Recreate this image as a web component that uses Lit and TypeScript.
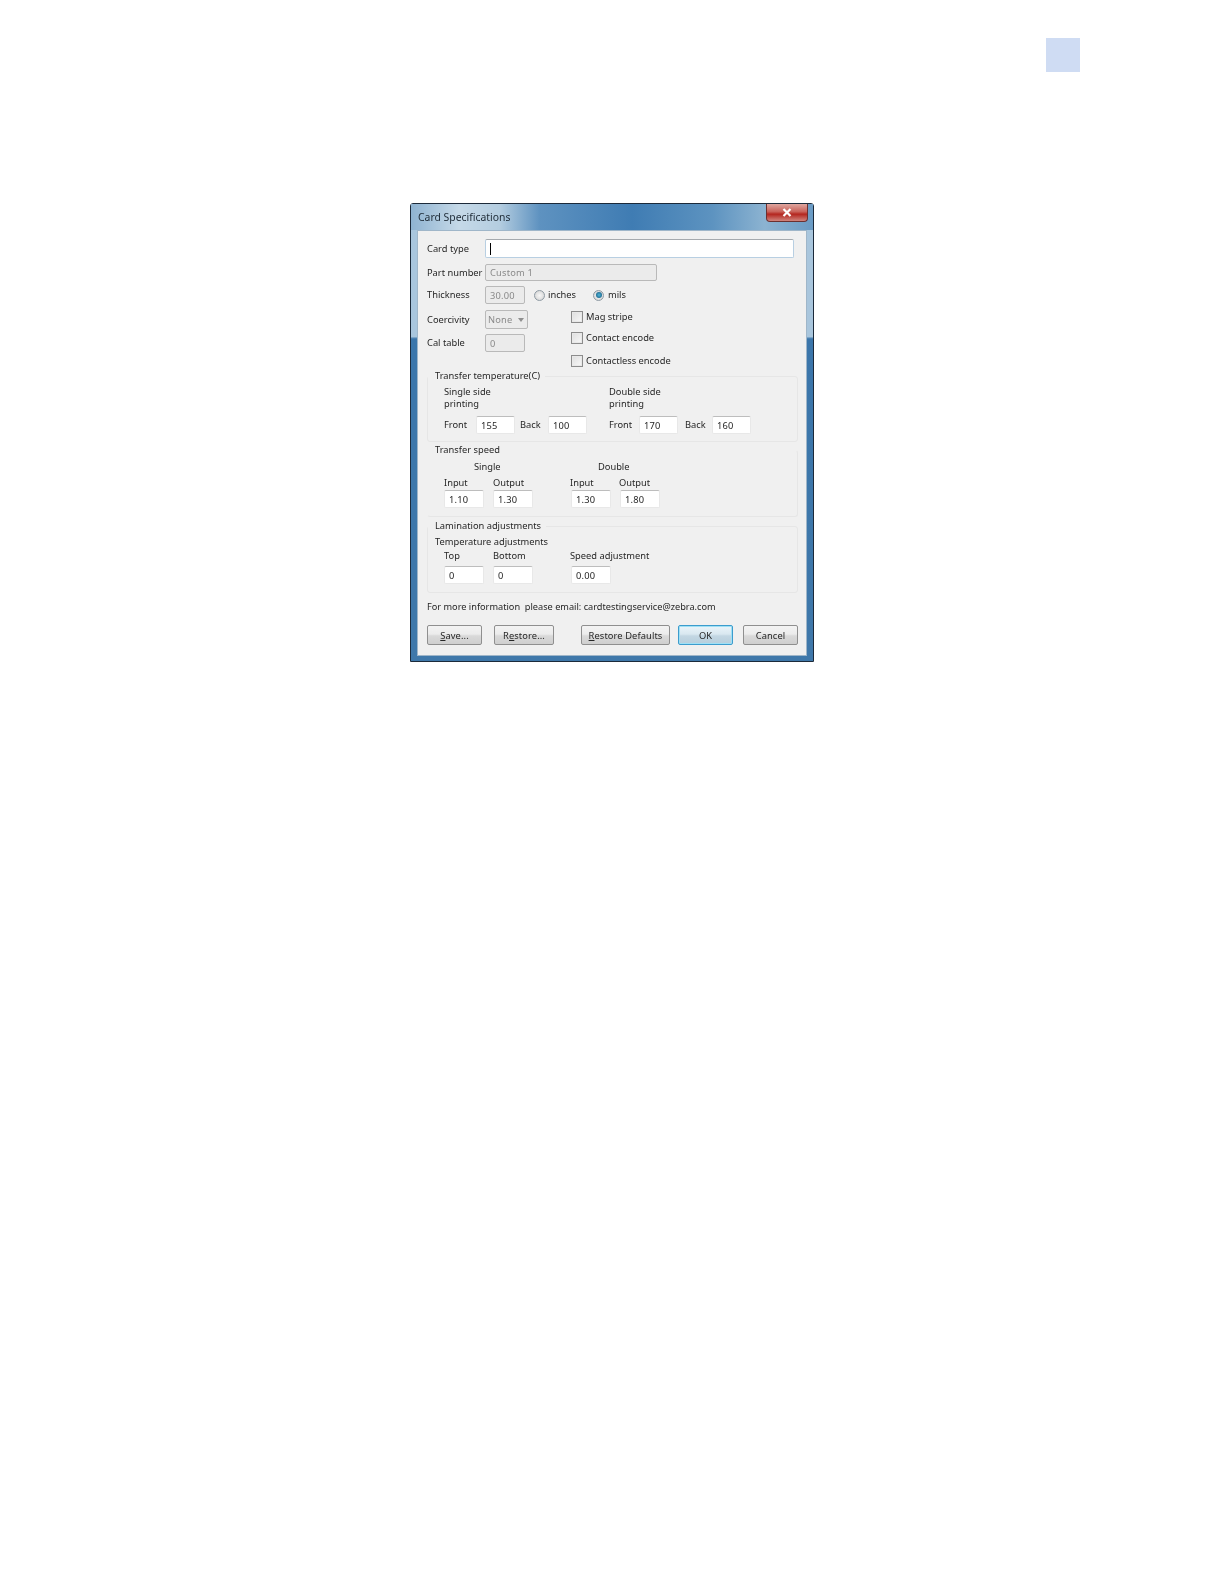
import { LitElement, html, css } from "lit";
import { customElement } from "lit/decorators.js";

@customElement("app-root")
export class AppRoot extends LitElement {
  static styles = css`
    :host { display: block; width: 1224px; height: 1584px; background: #fff; font-family: "Noto Sans", "Open Sans", sans-serif; font-size: 9.3px; color: #262626; overflow: hidden; }
    .top { display: flex; justify-content: flex-end; padding: 38px 144px 0 0; }
    .tab { width: 34px; height: 34px; background: #cfdcf3; }
    .window { margin: 131px 0 0 410px; width: 404px; height: 459px; box-sizing: border-box; border: 1px solid #1c2a3a; border-radius: 3px 3px 0 0; display: flex; flex-direction: column; filter: blur(.3px);
      background: linear-gradient(#a9c6dd 0, #a9c6dd 29%, #3b76ab 29.5%, #3f78aa 100%); }
    .title { height: 26px; flex: none; display: flex; justify-content: space-between; align-items: flex-start; padding-left: 7px; font-size: 10.4px; color: #1d2a36; line-height: 26px;
      background: linear-gradient(90deg, #8fb3d1 0, #c5d9e8 12%, #b4cde0 22%, #5e92c0 32%, #3f7cb3 55%, #5d93c0 75%, #8cb3d1 88%, #6a9bc5 100%); }
    .close { width: 42px; height: 18px; margin-right: 5px; border: 1px solid #6c3030; border-top: 0; border-radius: 0 0 4px 4px; box-sizing: border-box; background: linear-gradient(#dfa7a0, #c9625a 45%, #b4261f 60%, #d0857e); display: flex; align-items: center; justify-content: center; }
    .client { flex: 1; margin: 0 6px 5px; background: #f0f0f0; border: 1px solid #9fb6c9; box-sizing: border-box; padding: 0 8px 0 9px; display: flex; flex-direction: column; }
    .row { display: flex; align-items: center; }
    .lbl { white-space: nowrap; line-height: 14px; }
    .lbl2 { white-space: nowrap; line-height: 12px; }
    .info { font-size: 9.2px; }
    .field { box-sizing: border-box; height: 18px; background: #fff; border: 1px solid #e8e8e8; border-top-color: #bdbdbd; border-radius: 2px; padding-left: 4px; display: flex; align-items: center; font-size: 9.3px; letter-spacing: .2px; flex: none; width: 40px; }
    .dis { background: #ebebeb; border-color: #b9b9b9; color: #8a8a8a; }
    .cardtype { width: 309px; height: 19px; border-color: #b8cfe2; border-top-color: #a5a9ad; }
    .caret { width: 1px; height: 12px; background: #000; }
    .part { width: 172px; height: 17px; }
    .name { width: 58px; flex: none; }
    .sel { width: 43px; height: 19px; justify-content: space-between; padding: 0 3px 0 2px; }
    .arrow { width: 0; height: 0; border: 3.5px solid transparent; border-top: 4px solid #8f8f8f; border-bottom: 0; }
    .radio { width: 11px; height: 11px; border-radius: 50%; border: 1px solid #8e9aa3; box-sizing: border-box; background: radial-gradient(#f7f7f7, #d0d0d0); display: flex; align-items: center; justify-content: center; flex: none; }
    .radio.on i { width: 6px; height: 6px; border-radius: 50%; background: radial-gradient(#4fb6d8, #0f4f78); display: block; }
    .check { width: 12px; height: 12px; border: 1px solid #8c8c8c; box-sizing: border-box; background: linear-gradient(135deg, #dedede, #f8f8f8); box-shadow: inset 0 0 0 1px #e8e8e8; flex: none; }
    .mid { display: flex; }
    .midl { width: 144px; flex: none; display: flex; flex-direction: column; }
    .midr { display: flex; flex-direction: column; }
    .group { border: 1px solid #e6e6e6; border-radius: 3px; box-sizing: border-box; width: 371px; flex: none; }
    .nosides { border-top-color: transparent; border-left-color: transparent; }
    .legend { width: fit-content; background: #f0f0f0; padding: 0 5px 0 7px; line-height: 14px; white-space: nowrap; }
    .gpad { padding-left: 16px; }
    .btns { display: flex; margin-top: 11px; }
    .btn { height: 20px; box-sizing: border-box; border: 1px solid #8f8f8f; border-radius: 2px; background: linear-gradient(#f3f3f3 0, #ececec 45%, #d9d9d9 55%, #cfcfcf 100%); display: flex; align-items: center; justify-content: center; letter-spacing: .1px; flex: none; }
    .btn.def { border-color: #3c9ccd; box-shadow: inset 0 0 0 1px #9fe0f5; background: linear-gradient(#eaf4fa, #d9e8f0 45%, #c3d7e3 55%, #b6cedc); }
    u { text-decoration-thickness: 1px; text-underline-offset: 1px; }
    .mt1 { margin-top: 1px; } .mt2 { margin-top: 2px; } .mt3 { margin-top: 3px; } .mt4 { margin-top: 4px; }
    .mt5 { margin-top: 5px; } .mt6 { margin-top: 6px; } .mt7 { margin-top: 7px; } .mt8 { margin-top: 8px; }
    .mt9 { margin-top: 9px; } .mt11 { margin-top: 11px; } .up8 { margin-top: -8px; }
    .ml3 { margin-left: 3px; } .ml4 { margin-left: 4px; } .ml5 { margin-left: 5px; } .ml7 { margin-left: 7px; }
    .ml8 { margin-left: 8px; } .ml9 { margin-left: 9px; } .ml10 { margin-left: 10px; } .ml12 { margin-left: 12px; } .ml22 { margin-left: 22px; } .ml27 { margin-left: 27px; } .ml38 { margin-left: 38px; } .ml46 { margin-left: 46px; }
    .w27 { width: 27px; } .w28 { width: 28px; } .w30 { width: 30px; } .w32 { width: 32px; } .w45 { width: 45px; } .w49 { width: 49px; } .w77 { width: 77px; } .w124 { width: 124px; } .w165 { width: 165px; }
    .b55 { width: 55px; } .b60 { width: 60px; } .b89 { width: 89px; }
    .h12 { height: 12px; } .h14 { height: 14px; } .h18 { height: 18px; } .h19 { height: 19px; } .h17 { height: 17px; }
    .g1 { height: 66px; } .g2 { height: 67px; }
    .dbl { display: flex; }
    .w39 { width: 39px; }
  `;

  private inp(v: string, extra = "") {
    return html`<div class="field ${extra}">${v}</div>`;
  }

  render() {
    return html`
      <div class="top"><div class="tab"></div></div>
      <div class="window">
        <div class="title">
          <span>Card Specifications</span>
          <div class="close"><svg width="10" height="9" viewBox="0 0 10 9"><path d="M1.5 1 L8.5 8 M8.5 1 L1.5 8" stroke="#fff" stroke-width="2.2" fill="none"/></svg></div>
        </div>
        <div class="client">
          <div class="row mt8 h19"><div class="name lbl">Card type</div><div class="field cardtype"><div class="caret"></div></div></div>
          <div class="row mt6 h17"><div class="name lbl">Part number</div><div class="field dis part">Custom 1</div></div>
          <div class="row mt5 h18">
            <div class="name lbl">Thickness</div>${this.inp("30.00", "dis")}
            <div class="radio ml9"></div><div class="lbl ml3 w45">inches</div>
            <div class="radio on"><i></i></div><div class="lbl ml4">mils</div>
          </div>
          <div class="mid">
            <div class="midl">
              <div class="row mt6 h19"><div class="name lbl">Coercivity</div><div class="field dis sel">None<span class="arrow"></span></div></div>
              <div class="row mt5 h18"><div class="name lbl">Cal table</div>${this.inp("0", "dis")}</div>
            </div>
            <div class="midr">
              <div class="row mt7 h12"><div class="check"></div><div class="lbl ml3">Mag stripe</div></div>
              <div class="row mt9 h12"><div class="check"></div><div class="lbl ml3">Contact encode</div></div>
              <div class="row mt11 h12"><div class="check"></div><div class="lbl ml3">Contactless encode</div></div>
            </div>
          </div>

          <div class="group g1 mt9">
            <div class="legend up8">Transfer temperature(C)</div>
            <div class="gpad dbl mt3">
              <div class="lbl2 w165">Single side<br />printing</div>
              <div class="lbl2">Double side<br />printing</div>
            </div>
            <div class="gpad row mt6">
              <div class="lbl w32">Front</div>${this.inp("155", "w39")}
              <div class="lbl ml5 w28">Back</div>${this.inp("100", "w39")}
              <div class="lbl ml22 w30">Front</div>${this.inp("170", "w39")}
              <div class="lbl ml7 w27">Back</div>${this.inp("160", "w39")}
            </div>
          </div>

          <div class="group g2 nosides mt8">
            <div class="legend up8">Transfer speed</div>
            <div class="row mt3 h14"><div class="lbl ml46 w124">Single</div><div class="lbl">Double</div></div>
            <div class="gpad row mt2 h14">
              <div class="lbl w49">Input</div><div class="lbl w77">Output</div><div class="lbl w49">Input</div><div class="lbl">Output</div>
            </div>
            <div class="gpad row">
              ${this.inp("1.10")}<div class="ml9"></div>${this.inp("1.30")}<div class="ml38"></div>${this.inp("1.30")}<div class="ml9"></div>${this.inp("1.80")}
            </div>
          </div>

          <div class="group g2 mt9">
            <div class="legend up8">Lamination adjustments</div>
            <div class="lbl mt2 ml7">Temperature adjustments</div>
            <div class="gpad row h14">
              <div class="lbl w49">Top</div><div class="lbl w77">Bottom</div><div class="lbl">Speed adjustment</div>
            </div>
            <div class="gpad row mt3">
              ${this.inp("0")}<div class="ml9"></div>${this.inp("0")}<div class="ml38"></div>${this.inp("0.00")}
            </div>
          </div>

          <div class="lbl info mt7">For more information&nbsp; please email: cardtestingservice@zebra.com</div>

          <div class="btns">
            <div class="btn b55"><span><u>S</u>ave...</span></div>
            <div class="btn b60 ml12"><span>R<u>e</u>store...</span></div>
            <div class="btn b89 ml27"><span><u>R</u>estore Defaults</span></div>
            <div class="btn def b55 ml8">OK</div>
            <div class="btn b55 ml10">Cancel</div>
          </div>
        </div>
      </div>
    `;
  }
}
